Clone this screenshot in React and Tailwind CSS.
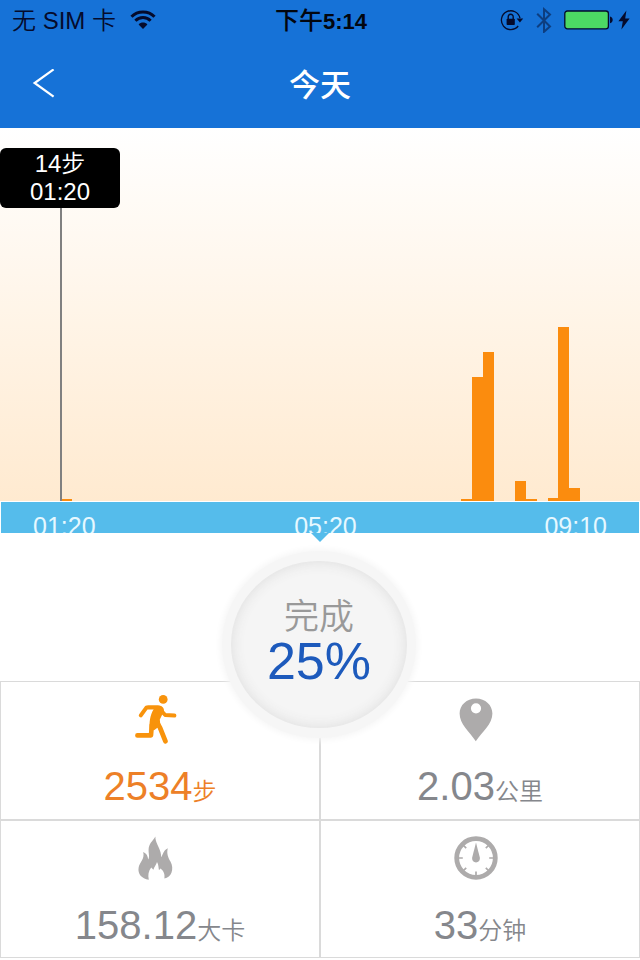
import { useState } from "react";

// x / height of every ten minute bar, in chart units
const bars = [
  { x: 61, height: 2, time: "01:20", steps: 14 },
  { x: 461, height: 2, time: "07:30", steps: 10 },
  { x: 472, height: 124, time: "07:40", steps: 650 },
  { x: 483, height: 149, time: "07:50", steps: 782 },
  { x: 515, height: 20, time: "08:20", steps: 108 },
  { x: 526, height: 2, time: "08:30", steps: 9 },
  { x: 548, height: 3, time: "08:50", steps: 16 },
  { x: 558, height: 174, time: "09:00", steps: 880 },
  { x: 569, height: 13, time: "09:10", steps: 65 },
];

const WifiIcon = () => (
  <svg viewBox="0 0 26 20" className="h-5 w-[26px]" fill="none" stroke="currentColor">
    <path d="M1.5 6.7C7.5 .3 18.5 .3 24.5 6.7" strokeWidth="3" />
    <path d="M5.4 10.8C9.6 6.4 16.4 6.4 20.6 10.8" strokeWidth="3" />
    <path d="M13 19 8.6 14.4C11 12 15 12 17.4 14.4Z" fill="currentColor" stroke="none" />
  </svg>
);

const RotationLockIcon = () => (
  <svg viewBox="0 0 24 22" className="h-[22px] w-6" fill="none" stroke="currentColor">
    <path d="M20 9.2A9.4 9.4 0 1 0 18.2 17" strokeWidth="1.3" />
    <path d="M16.6 9.4h6.6l-3.3 4z" fill="currentColor" stroke="none" />
    <path d="M8.2 10V7.8a2.5 2.5 0 0 1 5 0V10" strokeWidth="1.4" />
    <rect x="6.6" y="9.8" width="8.2" height="6.2" rx=".8" fill="currentColor" stroke="none" />
  </svg>
);

const BluetoothIcon = () => (
  <svg viewBox="0 0 16 26" className="h-[26px] w-4 opacity-50" fill="none" stroke="currentColor" strokeWidth="2">
    <path d="M1.2 6.7 14 19.5 8 24.8V2.2L14 7.5 1.2 20.3" />
  </svg>
);

const BatteryIcon = () => (
  <svg viewBox="0 0 50 20" className="h-5 w-[50px]">
    <rect x=".8" y="1" width="43.6" height="17.8" rx="2.6" fill="#4cd964" stroke="currentColor" strokeWidth="1.3" />
    <path d="M46 6.4c3.6.6 3.6 6.2 0 6.8z" fill="currentColor" />
  </svg>
);

const BoltIcon = () => (
  <svg viewBox="0 0 12 20" className="h-5 w-3" fill="currentColor">
    <path d="M8.4.6.4 11.2h4.4L3.4 19.4 11.6 8.4H7.2z" />
  </svg>
);

const RunnerIcon = () => (
  <svg viewBox="0 0 44 52" className="h-[52px] w-11 text-[#f8930c]" fill="none" stroke="currentColor" strokeLinecap="round" strokeLinejoin="round">
    <circle cx="29.2" cy="5.4" r="4.4" fill="currentColor" stroke="none" />
    <path d="M6.8 21.4 12.6 13.4H24" strokeWidth="4" />
    <path d="M25 14.4 31.2 21 40.4 21.6" strokeWidth="4" />
    <path d="M13 11.4H25.6Q30.2 12.4 30 17L25.8 25.4 26.4 31.4 20.4 36 15.8 37C15 28 16 21 19.8 15Z" fill="currentColor" stroke="none" />
    <path d="M3.4 41.4H17L17.8 31" strokeWidth="4.6" />
    <path d="M22.2 27 26 33.6 31.4 47.2" strokeWidth="4.8" />
  </svg>
);

const PinIcon = () => (
  <svg viewBox="0 0 44 52" className="h-[52px] w-11" fill="#adabab">
    <path
      fillRule="evenodd"
      d="M22 4.4C12.6 4.4 5.6 11 5.6 19.6 5.6 30 15.4 38 21.8 47.2 28.4 38 38.4 30 38.4 19.6 38.4 11 31.4 4.4 22 4.4ZM22 9.2a5.1 5.1 0 1 1 0 10.2 5.1 5.1 0 0 1 0-10.2Z"
    />
  </svg>
);

const FireIcon = () => (
  <svg viewBox="0 0 44 52" className="h-[52px] w-11" fill="#adabab">
    <path d="M21.4 3.4C21 8.8 25.4 14.2 26.6 19.4 27 21.2 27.2 22.8 27.2 24.2 29 21.6 29 17.6 33.8 15.2 32.4 20.6 34.2 24.4 36.6 28.8 40.4 36.2 37.4 44.6 30.4 45.6 31 41.4 30 38.2 26.4 35.6L25 37.2C24.4 34.8 24.6 31.4 23 29 22.2 32 20.4 33.2 19.4 36.8L17.2 34.6C14.4 38.2 13.8 42.2 14.8 46.8 7.6 45.6 3.6 41 4.6 34.8 5.4 29.4 11 26.2 9.2 19 12.4 20.2 13.8 22.8 14.2 26.4 16 23.6 14.4 20.8 14.6 16.2 14.8 10.8 18.6 8 21.4 3.4Z" />
  </svg>
);

const GaugeIcon = () => (
  <svg viewBox="0 0 44 52" className="h-[52px] w-11" fill="none" stroke="#adabab">
    <circle cx="22" cy="25" r="19.3" strokeWidth="4.8" />
    <path strokeWidth="1.7" d="M22 43v-4.4M4 25h4.8M40 25h-4.8M9 12l3.2 3.2M35 12l-3.2 3.2M9 38l3.2-3.2M35 38l-3.2-3.2" />
    <path d="M22 9.6 25.8 24.6C26.8 31 17.2 31 18.2 24.6Z" fill="#adabab" stroke="none" />
  </svg>
);

const stats = [
  { value: "2534", unit: "步", icon: RunnerIcon, box: "border-t", color: "text-[#ed8027]" },
  { value: "2.03", unit: "公里", icon: PinIcon, box: "border-t", color: "text-[#85878c]" },
  { value: "158.12", unit: "大卡", icon: FireIcon, box: "border-t-2", color: "text-[#85878c]" },
  { value: "33", unit: "分钟", icon: GaugeIcon, box: "border-t-2", color: "text-[#85878c]" },
];

const StatusBar = () => (
  <div className="grid h-10 grid-cols-[1fr_auto_1fr] items-center pl-3 pr-2.5 text-2xl text-[#050b2c]">
    <div className="flex items-center gap-3.5">
      <span className="pt-0.5 font-[350]">无 SIM 卡</span>
      <WifiIcon />
    </div>
    <span className="pt-0.5 font-medium text-[#02060f]">
      下午<b className="text-[22px]">5:14</b>
    </span>
    <div className="flex items-center justify-end">
      <RotationLockIcon />
      <span className="ml-3 mr-3 flex">
        <BluetoothIcon />
      </span>
      <BatteryIcon />
      <span className="ml-1 flex">
        <BoltIcon />
      </span>
    </div>
  </div>
);

const StepChart = () => {
  const [selected, setSelected] = useState(bars[0]);

  return (
    <section className="relative">
      <svg
        viewBox="0 0 640 374"
        preserveAspectRatio="none"
        className="block h-[374px] w-full bg-linear-to-b from-white to-[#ffead0]"
      >
        {bars.map((bar) => (
          <rect
            key={bar.x}
            x={bar.x}
            y={373 - bar.height}
            width="11"
            height={bar.height}
            fill="#fb8c0e"
            onClick={() => setSelected(bar)}
          />
        ))}
        <rect x={selected.x - 1} y="80" width="2" height="293" fill="#808080" />
        <rect y="373" width="640" height="1" fill="#fff" />
      </svg>

      {/* Selected bar */}
      <div className="absolute left-0 top-5 w-30 rounded-md bg-black py-0.5 text-center text-2xl leading-7 text-white">
        <p className="font-[350]">{selected.steps}步</p>
        <p>{selected.time}</p>
      </div>

      {/* Time axis */}
      <div className="mx-px grid h-[31px] grid-cols-[24fr_23fr_auto] overflow-hidden bg-[#55bceb] px-8 pt-2 text-[25px] leading-8 text-[#e6f8ff]">
        <span>01:20</span>
        <span>05:20</span>
        <span>09:10</span>
      </div>
      <svg viewBox="0 0 18 9" className="absolute left-1/2 top-full -ml-[9px] h-[9px] w-[18px]" fill="#55bceb">
        <path d="M0 0H18L9 9Z" />
      </svg>
    </section>
  );
};

const App = () => {
  return (
    <div className="min-h-screen bg-white font-['Liberation_Sans','Noto_Sans_CJK_SC',sans-serif]">
      <header className="bg-[#1672d7]">
        <StatusBar />
        <div className="grid h-22 grid-cols-[1fr_auto_1fr] items-center text-white">
          <button type="button" aria-label="返回" className="ml-8 w-6">
            <svg viewBox="0 0 24 30" className="h-[30px] w-6" fill="none" stroke="currentColor" strokeWidth="2.2">
              <path d="M21.6 .4 2.6 14 21.6 27.6" />
            </svg>
          </button>
          <h1 className="pt-1 text-[31px] font-medium">今天</h1>
        </div>
      </header>

      <main>
        <StepChart />

        {/* Goal progress */}
        <section className="relative z-10 -mb-[57px] flex justify-center pr-0.5 pt-[18px]">
          <div className="flex h-[187px] w-[194px] items-center justify-center rounded-[50%] bg-[#f6f6f6] shadow-[0_0_6px_2px_#f6f6f6]">
            <div className="flex h-[167px] w-[176px] flex-col items-center rounded-[50%] bg-[#f5f5f5] pt-9 shadow-[inset_0_0_14px_#dcdcdc]">
              <p className="text-[35px] leading-10 font-[350] text-[#999]">完成</p>
              <p className="text-[52px] leading-12 text-[#1d5abc]">25%</p>
            </div>
          </div>
        </section>

        <section className="grid grid-cols-2 border-x border-b border-[#dadada]">
          {stats.map(({ value, unit, icon: Icon, box, color }) => (
            <div
              key={unit}
              className={`flex h-[138px] flex-col items-center border-[#dadada] pt-3 odd:border-r even:border-l ${box} ${color}`}
            >
              <span className="mr-2">
                <Icon />
              </span>
              <p className="mt-4 text-[40px] leading-12">
                {value}
                <span className="text-2xl font-[350]">{unit}</span>
              </p>
            </div>
          ))}
        </section>
      </main>
    </div>
  );
};

export default App;
